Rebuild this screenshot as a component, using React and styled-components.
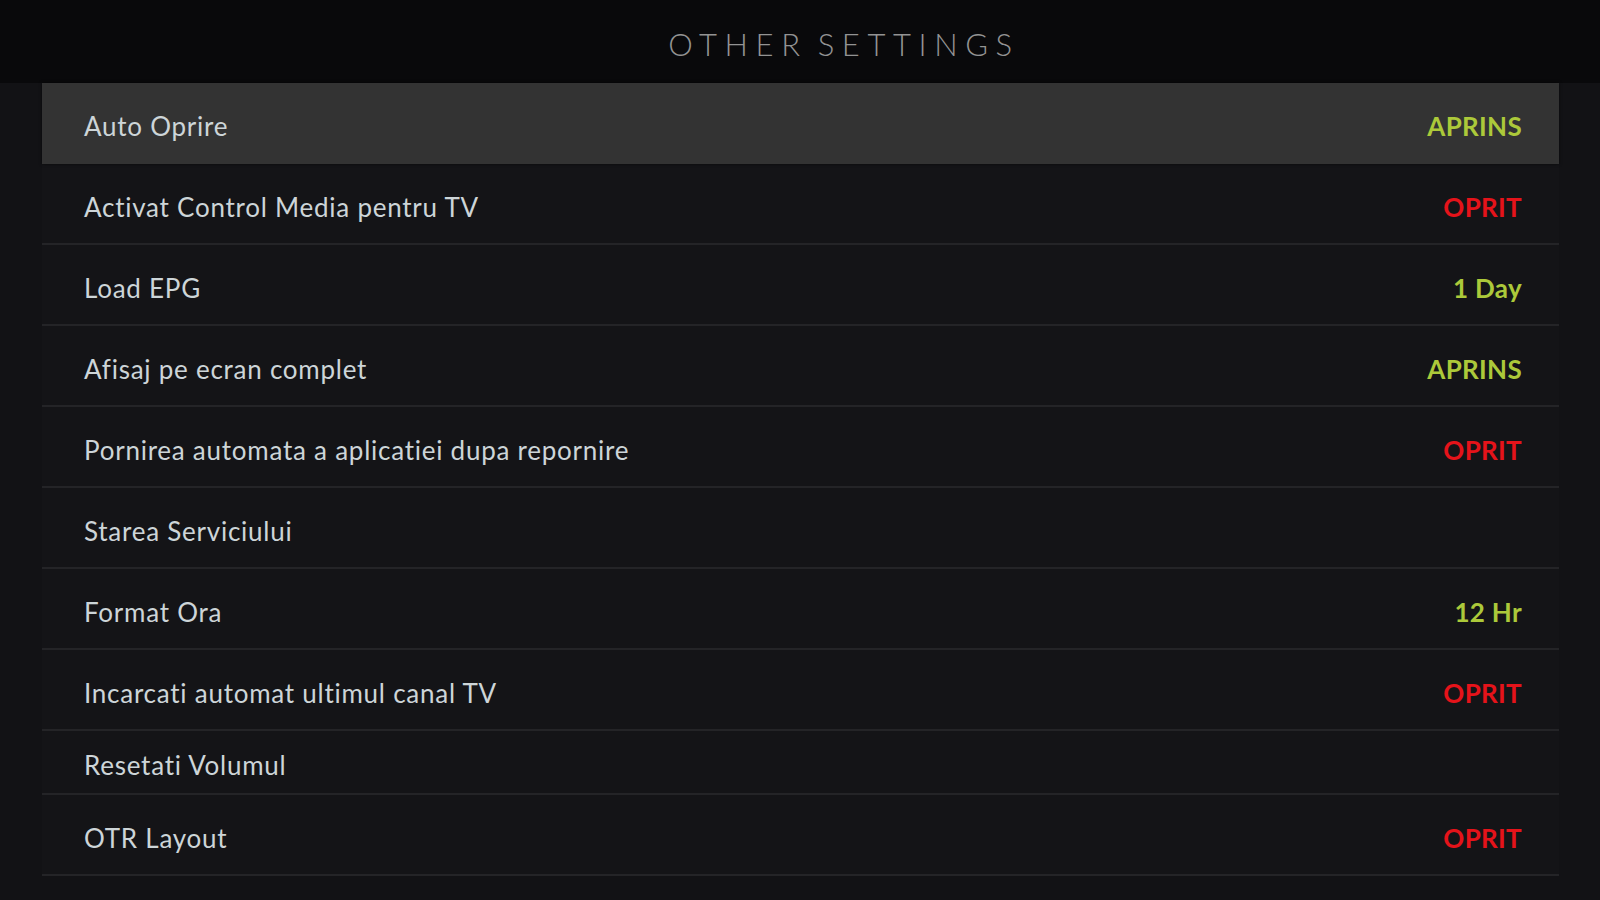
import React from "react";
import styled, { createGlobalStyle } from "styled-components";

const Global = createGlobalStyle`
  html, body { margin: 0; padding: 0; background: #121215; }
  body { font-family: "Lato", "Noto Sans", sans-serif; }
  #root { min-height: 900px; }
`;

const Page = styled.div`
  width: 1600px;
  height: 900px;
  overflow: hidden;
  display: flex;
  flex-direction: column;
  background: #121215;
`;

const Header = styled.header`
  height: 83px;
  flex: none;
  display: flex;
  align-items: center;
  justify-content: center;
  padding-left: 88px;
  box-sizing: border-box;
  background: #09090b;
`;

const Title = styled.h1`
  margin: 0;
  font-family: "Lato", sans-serif;
  font-weight: 300;
  font-size: 31px;
  letter-spacing: 7.6px;
  word-spacing: -6px;
  color: #939393;
  line-height: 1;
  transform: translateY(3px);
`;

const List = styled.div`
  margin: 0 41px 0 42px;
  display: flex;
  flex-direction: column;
  background: #141417;
`;

const Row = styled.div`
  height: ${(p) => p.$h}px;
  box-sizing: border-box;
  display: flex;
  align-items: center;
  justify-content: space-between;
  padding: 6px 37px 0 42px;
  background: ${(p) => (p.$active ? "#333333" : "transparent")};
  border-bottom: 2px solid ${(p) => (p.$active ? "#333333" : "#242427")};
  box-shadow: ${(p) => (p.$active ? "0 0 3px rgba(0,0,0,0.6)" : "none")};
`;

const Label = styled.span`
  font-family: "Lato", sans-serif;
  font-size: 26px;
  font-weight: 400;
  color: #cdd5d8;
  letter-spacing: 0.75px;
`;

const Value = styled.span`
  font-family: "Lato", sans-serif;
  font-size: 26px;
  font-weight: 700;
  letter-spacing: 0.3px;
  color: ${(p) => (p.$off ? "#e5131a" : "#acc93a")};
`;

const rows = [
  { label: "Auto Oprire", value: "APRINS", active: true, h: 81 },
  { label: "Activat Control Media pentru TV", value: "OPRIT", off: true, h: 81 },
  { label: "Load EPG", value: "1 Day", h: 81 },
  { label: "Afisaj pe ecran complet", value: "APRINS", h: 81 },
  { label: "Pornirea automata a aplicatiei dupa repornire", value: "OPRIT", off: true, h: 81 },
  { label: "Starea Serviciului", value: "", h: 81 },
  { label: "Format Ora", value: "12 Hr", h: 81 },
  { label: "Incarcati automat ultimul canal TV", value: "OPRIT", off: true, h: 81 },
  { label: "Resetati Volumul", value: "", h: 64 },
  { label: "OTR Layout", value: "OPRIT", off: true, h: 81 },
];

export default function App() {
  return (
    <Page>
      <Global />
      <Header>
        <Title>OTHER SETTINGS</Title>
      </Header>
      <List>
        {rows.map((r) => (
          <Row key={r.label} $active={r.active} $h={r.h}>
            <Label>{r.label}</Label>
            {r.value && <Value $off={r.off}>{r.value}</Value>}
          </Row>
        ))}
      </List>
    </Page>
  );
}
